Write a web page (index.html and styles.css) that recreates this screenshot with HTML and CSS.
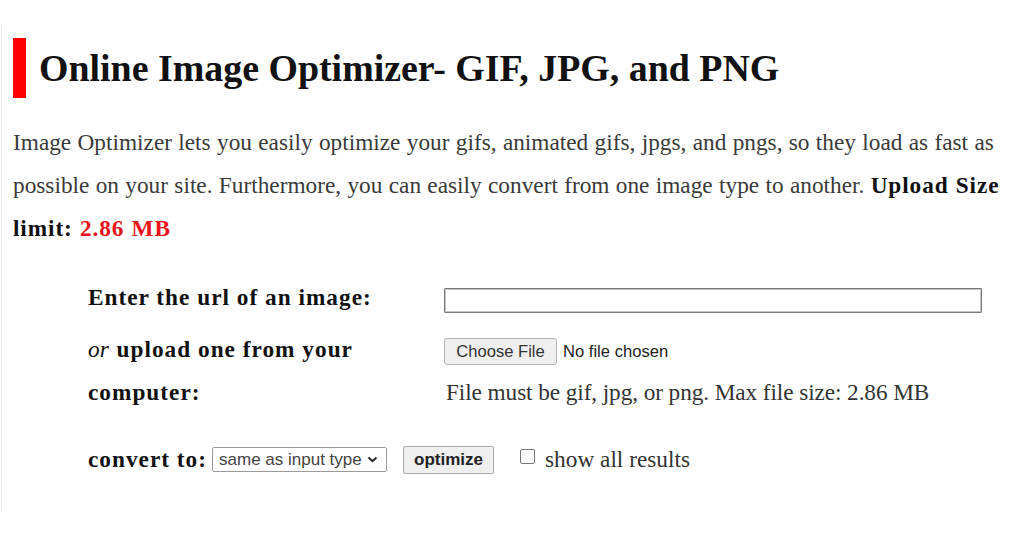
FILE: index.html
```html
<!DOCTYPE html>
<html>
<head>
<meta charset="utf-8">
<link rel="stylesheet" href="styles.css">
</head>
<body>
<div class="page">
  <h1 class="title">Online Image Optimizer- GIF, JPG, and PNG</h1>
  <p class="intro">Image Optimizer lets you easily optimize your gifs, animated gifs, jpgs, and pngs, so they load as fast as possible on your site. Furthermore, you can easily convert from one image type to another. <b>Upload Size limit: <span class="red">2.86 MB</span></b></p>
  <form class="form">
    <div class="row">
      <div class="label">Enter the url of an image:</div>
      <div class="field"><input class="url" type="text"></div>
    </div>
    <div class="row second">
      <div class="label two"><i>or</i> upload one from your computer:</div>
      <div class="field">
        <div class="filerow"><span class="filebtn">Choose File</span><span class="nofile">No file chosen</span></div>
        <div class="note">File must be gif, jpg, or png. Max file size: 2.86 MB</div>
      </div>
    </div>
    <div class="convert">
      <span class="label">convert to:</span>
      <span class="select">same as input type <svg width="11" height="7" viewBox="0 0 11 7"><path d="M1.5 1.5 L5.5 5.2 L9.5 1.5" fill="none" stroke="#222" stroke-width="2"/></svg></span>
      <span class="optbtn">optimize</span>
      <span class="check"></span>
      <span class="showall">show all results</span>
    </div>
  </form>
</div>
</body>
</html>
```
FILE: styles.css
```css
html, body {
  margin: 0;
  padding: 0;
  background: #fff;
}
body {
  font-family: "Liberation Serif", "Times New Roman", serif;
  color: #333;
}
.page {
  margin: 25px 0 28px 1px;
  height: 485px;
  border-left: 1px solid #ececec;
  padding: 13px 0 0 11px;
  box-sizing: border-box;
}
.title {
  margin: 0;
  border-left: 13px solid #f00;
  padding-left: 13px;
  height: 60px;
  display: flex;
  align-items: center;
  font-size: 37.9px;
  font-weight: bold;
  color: #111;
}
.intro {
  margin: 23px 0 0 0;
  font-size: 23.3px;
  line-height: 43px;
  color: #3a3a3a;
  word-spacing: 0.5px;
}
.intro b {
  color: #111;
  letter-spacing: 0.9px;
}
.red { color: #e8131b; }
.form {
  margin: 26px 0 0 75px;
}
.row {
  display: grid;
  grid-template-columns: 356px 538px;
  align-items: start;
}
.row.second { margin-top: 9px; }
.label {
  font-size: 23.3px;
  font-weight: bold;
  color: #111;
  line-height: 43px;
  letter-spacing: 1px;
}
.label i { font-weight: normal; letter-spacing: 0; padding-right: 1px; }
.label.two { width: 300px; }
.url {
  display: block;
  margin-top: 12px;
  width: 538px;
  height: 25px;
  box-sizing: border-box;
  border: 1px solid #7a7a7a;
  border-radius: 1px;
  box-shadow: inset 0 0 0 1px #c4c4c4;
  padding: 0;
}
.filerow {
  display: flex;
  align-items: center;
  margin-top: 10px;
  height: 27px;
  font-family: "Liberation Sans", Arial, sans-serif;
  font-size: 16.6px;
  color: #222;
}
.filebtn {
  display: inline-flex;
  align-items: center;
  justify-content: center;
  width: 113px;
  height: 27px;
  box-sizing: border-box;
  background: #efefef;
  border: 1px solid #b5b5b5;
  border-radius: 3px;
  color: #333;
}
.nofile { margin-left: 6px; }
.note {
  margin-top: 6px;
  padding-left: 2px;
  font-size: 23.3px;
  line-height: 43px;
  color: #333;
  letter-spacing: -0.1px;
}
.convert {
  display: flex;
  align-items: center;
  margin-top: 24px;
  height: 43px;
}
.select {
  display: inline-flex;
  align-items: center;
  gap: 5px;
  margin-left: 5px;
  height: 25px;
  width: 175px;
  box-sizing: border-box;
  padding-left: 6px;
  border: 1px solid #9a9a9a;
  border-radius: 2px;
  font-family: "Liberation Sans", Arial, sans-serif;
  font-size: 17px;
  color: #444;
}
.optbtn {
  display: inline-flex;
  align-items: center;
  justify-content: center;
  margin-left: 16px;
  width: 91px;
  height: 28px;
  box-sizing: border-box;
  background: #efefef;
  border: 1px solid #aaa;
  border-radius: 2px;
  font-family: "Liberation Sans", Arial, sans-serif;
  font-weight: bold;
  font-size: 17px;
  color: #222;
}
.check {
  margin-left: 26px;
  width: 15px;
  height: 15px;
  box-sizing: border-box;
  border: 1px solid #777;
  border-radius: 2px;
  margin-top: -6px;
}
.showall {
  margin-left: 10px;
  font-size: 23.3px;
  color: #333;
}
```
